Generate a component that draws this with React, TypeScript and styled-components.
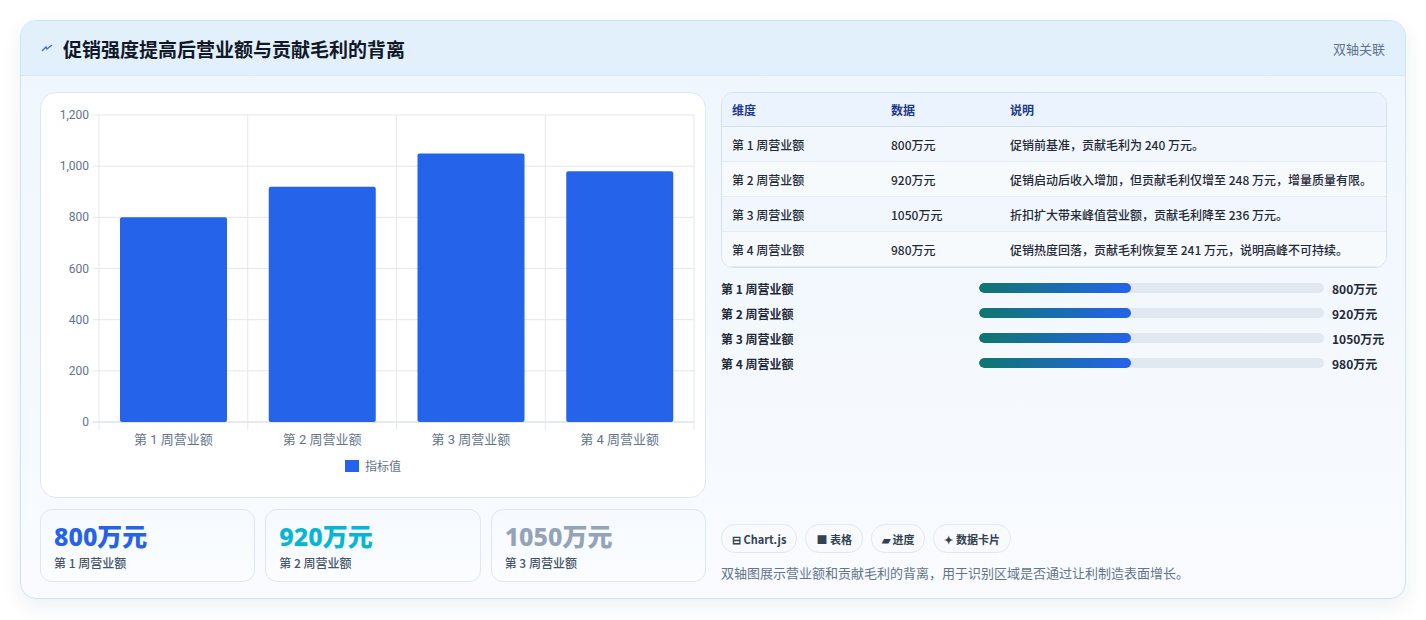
import React from "react";
import styled, { createGlobalStyle } from "styled-components";

const Global = createGlobalStyle`
  body { margin: 0; background: #eef1f5; font-family: "Noto Sans CJK SC", "Noto Sans", sans-serif; }
`;
const Page = styled.div`padding: 20px 20px 20px 20px; height: 620px; box-sizing: border-box; background: #ffffff;`;
const Card = styled.div`
  width: 1386px; height: 579px; box-sizing: border-box; border: 1px solid #cfe3ee; border-radius: 16px;
  background: linear-gradient(180deg, #eef6fd 0%, #f9fbff 100%); overflow: hidden;
  box-shadow: 0 8px 20px rgba(30,60,100,0.08); display: flex; flex-direction: column;
`;
const Header = styled.div`
  height: 55px; flex: none; display: flex; align-items: center; justify-content: space-between; padding: 0 20px;
  background: #e2f0fc; border-bottom: 1px solid #d6e7f5; box-sizing: border-box;
`;
const Title = styled.h1`margin: 0; font-size: 19px; font-weight: 700; color: #111827; display: flex; align-items: center; gap: 10px;`;
const Badge = styled.span`font-size: 13px; color: #64748b;`;
const Body = styled.div`flex: 1; display: grid; grid-template-columns: 666px 666px; gap: 15px; padding: 16px 19px 18px 19px;`;
const Col = styled.div`display: flex; flex-direction: column; gap: 11px; min-height: 0;`;
const RCol = styled.div`display: flex; flex-direction: column; justify-content: space-between;`;
const ChartCard = styled.div`height: 404px; background: #fff; border: 1px solid #dde8f2; border-radius: 16px; position: relative;`;
const Kpis = styled.div`display: grid; grid-template-columns: repeat(3, 1fr); gap: 10px;`;
const Kpi = styled.div`height: 73px; box-sizing: border-box; border: 1px solid #dbe7f3; border-radius: 12px; background: linear-gradient(180deg,#f6faff,#fbfdff); padding: 10px 13px;`;
const KpiVal = styled.div<{ c: string }>`font-size: 25px; font-weight: 800; color: ${p => p.c}; line-height: 32px; font-family: "Noto Sans", "Noto Sans CJK SC", sans-serif;`;
const KpiLabel = styled.div`font-size: 12px; color: #475569; margin-top: 2px; font-weight: 500;`;
const Table = styled.table`width: 100%; border-collapse: separate; border-spacing: 0; border: 1px solid #d5e2ee; border-radius: 12px; overflow: hidden; font-size: 12px;`;
const Th = styled.th`text-align: left; font-weight: 600; color: #1e3a8a; background: #eaf3fe; height: 33px; padding: 0 10px; border-bottom: 1px solid #d5e2ee;`;
const Td = styled.td<{ alt?: boolean }>`height: 34px; padding: 0 10px; color: #1f2937; font-weight: 500; border-bottom: 1px solid #e3ebf3; background: ${p => p.alt ? "#f7fafd" : "#f1f7fd"};`;
const Bars = styled.div`display: flex; flex-direction: column; gap: 7px; margin-top: 11px;`;
const BarRow = styled.div`display: grid; grid-template-columns: 250px 345px auto; align-items: center; gap: 8px; height: 18px; font-size: 12px; font-weight: 700; color: #1f2937;`;
const Track = styled.div`height: 10px; background: #e2e8f0; border-radius: 5px; overflow: hidden;`;
const Fill = styled.div`height: 100%; border-radius: 5px; background: linear-gradient(90deg,#0f766e,#2563eb);`;
const Tags = styled.div`display: flex; gap: 8px;`;
const Tag = styled.span`height: 27px; padding: 0 10px; display: inline-flex; align-items: center; border: 1px solid #e2e8f0; border-radius: 14px; background: #f8fafc; font-size: 11px; font-weight: 700; color: #334155;`;
const Note = styled.p`margin: 10px 0 0; font-size: 13px; color: #64748b;`;
const Legend = styled.div`position: absolute; left: 0; right: 0; top: 364px; display: flex; justify-content: center; align-items: center; gap: 6px; font-size: 12px; color: #64748b;`;
const Swatch = styled.span`width: 14px; height: 12px; background: #2563eb;`;

const labels = ["第 1 周营业额", "第 2 周营业额", "第 3 周营业额", "第 4 周营业额"];
const vals = [800, 920, 1050, 980];
const notes = ["促销前基准，贡献毛利为 240 万元。", "促销启动后收入增加，但贡献毛利仅增至 248 万元，增量质量有限。", "折扣扩大带来峰值营业额，贡献毛利降至 236 万元。", "促销热度回落，贡献毛利恢复至 241 万元，说明高峰不可持续。"];

function Chart() {
  const x0 = 58, x1 = 653, y0 = 22, y1 = 329;
  const h = y1 - y0, cw = (x1 - x0) / 4;
  return (
    <svg width="666" height="404" style={{ display: "block" }} fontFamily="Roboto, 'Noto Sans CJK SC', sans-serif">
      {[0, 200, 400, 600, 800, 1000, 1200].map(t => {
        const y = y1 - (t / 1200) * h;
        return <g key={t}>
          <line x1={x0 - 6} x2={x1} y1={y} y2={y} stroke={t === 0 ? "#cbd5e1" : "#e5e7eb"} />
          <text x={x0 - 10} y={y + 4} textAnchor="end" fontSize="12" fill="#64748b">{t.toLocaleString("en-US")}</text>
        </g>;
      })}
      {[0, 1, 2, 3, 4].map(i => <line key={i} x1={x0 + i * cw} x2={x0 + i * cw} y1={y0} y2={y1 + 8} stroke="#e5e7eb" />)}
      {vals.map((v, i) => {
        const bh = (v / 1200) * h;
        return <g key={i}>
          <rect x={x0 + i * cw + 21} y={y1 - bh} width={107} height={bh} fill="#2563eb" rx="2" />
          <text x={x0 + i * cw + cw / 2} y={y1 + 22} textAnchor="middle" fontSize="13" fill="#64748b">{labels[i]}</text>
        </g>;
      })}
    </svg>
  );
}

export default function App() {
  return (
    <Page>
      <Global />
      <Card>
        <Header>
          <Title><svg width="12" height="10" viewBox="0 0 12 10"><path d="M1 8 L5 4 L6 6 L11 2" stroke="#3b6fd8" strokeWidth="1.4" fill="none" /></svg>促销强度提高后营业额与贡献毛利的背离</Title>
          <Badge>双轴关联</Badge>
        </Header>
        <Body>
          <Col>
            <ChartCard>
              <Chart />
              <Legend><Swatch />指标值</Legend>
            </ChartCard>
            <Kpis>
              <Kpi><KpiVal c="#2563eb">800万元</KpiVal><KpiLabel>第 1 周营业额</KpiLabel></Kpi>
              <Kpi><KpiVal c="#06b6d4">920万元</KpiVal><KpiLabel>第 2 周营业额</KpiLabel></Kpi>
              <Kpi><KpiVal c="#94a3b8">1050万元</KpiVal><KpiLabel>第 3 周营业额</KpiLabel></Kpi>
            </Kpis>
          </Col>
          <RCol>
            <div>
              <Table>
                <thead><tr><Th style={{ width: 139 }}>维度</Th><Th style={{ width: 99 }}>数据</Th><Th>说明</Th></tr></thead>
                <tbody>
                  {labels.map((l, i) => (
                    <tr key={l}><Td alt={i % 2 === 1}>{l}</Td><Td alt={i % 2 === 1}>{vals[i]}万元</Td><Td alt={i % 2 === 1}>{notes[i]}</Td></tr>
                  ))}
                </tbody>
              </Table>
              <Bars>
                {labels.map((l, i) => (
                  <BarRow key={l}><span>{l}</span><Track><Fill style={{ width: "44%" }} /></Track><span>{vals[i]}万元</span></BarRow>
                ))}
              </Bars>
            </div>
            <div>
              <Tags><Tag>⊟ Chart.js</Tag><Tag>■ 表格</Tag><Tag>▰ 进度</Tag><Tag>✦ 数据卡片</Tag></Tags>
              <Note>双轴图展示营业额和贡献毛利的背离，用于识别区域是否通过让利制造表面增长。</Note>
            </div>
          </RCol>
        </Body>
      </Card>
    </Page>
  );
}
